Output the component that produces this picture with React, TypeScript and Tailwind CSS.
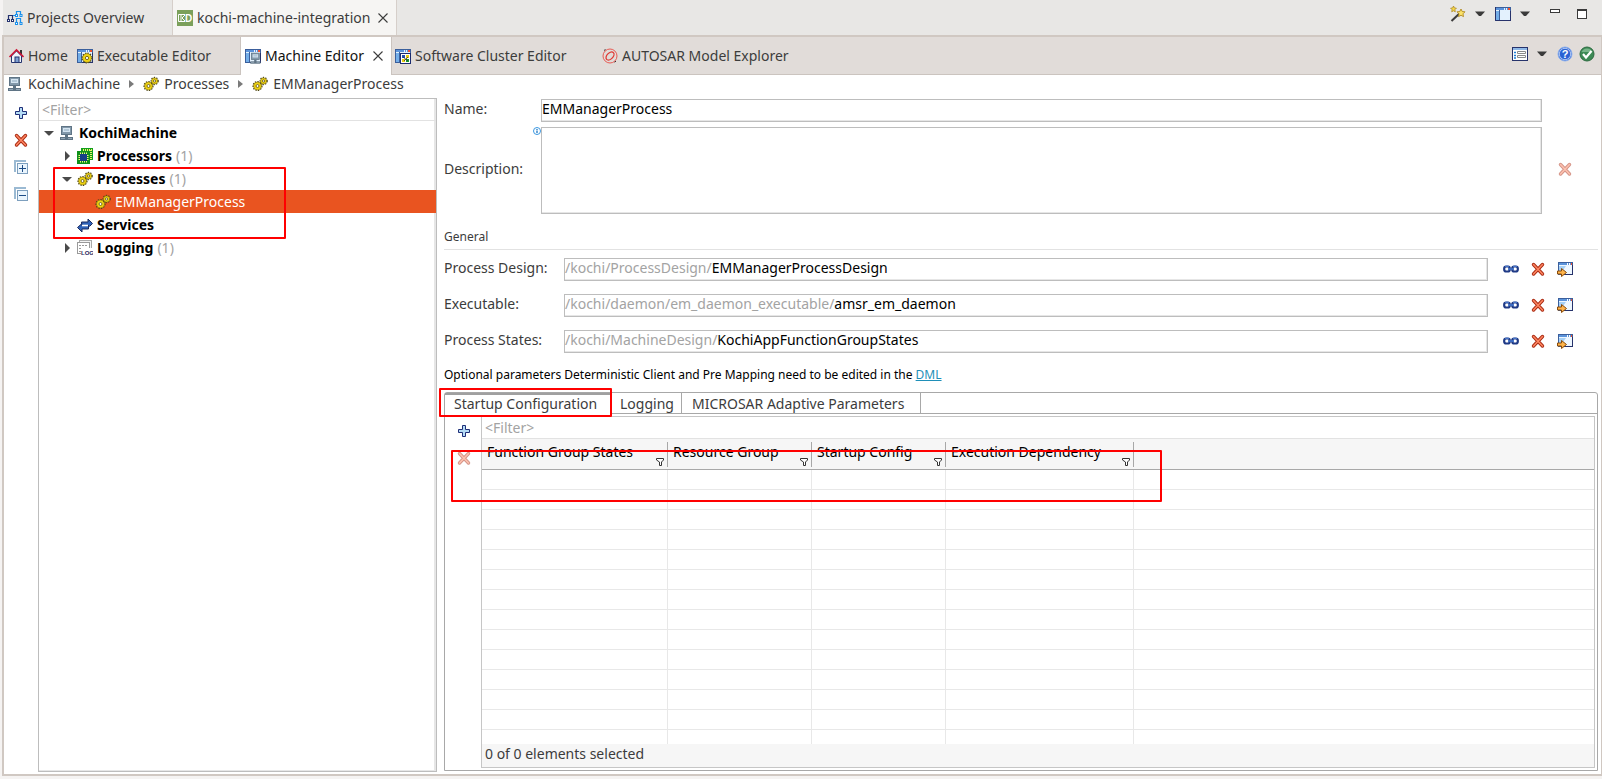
import type { ReactNode } from "react";
import clsx from "clsx";

type IconProps = { className?: string };

const field = "border border-[#bdbdbd] bg-white shadow-[inset_-1px_-1px_0_#e6e6e6] outline-none";

function Svg({ children, className }: IconProps & { children: ReactNode }) {
  return (
    <svg viewBox="0 0 16 16" className={clsx("w-4 h-4 shrink-0", className)} fill="none" aria-hidden="true">
      {children}
    </svg>
  );
}

function Cog({ x, y, r }: { x: number; y: number; r: number }) {
  return (
    <g>
      <circle cx={x} cy={y} r={r} stroke="#4a4318" strokeWidth="1.8" strokeDasharray="1.2 1.2" />
      <circle cx={x} cy={y} r={r - 0.2} fill="#f0d313" stroke="#7a6c0c" strokeWidth="0.6" />
      <circle cx={x} cy={y} r={r * 0.35} fill="#fff" stroke="#5c5108" strokeWidth="0.8" />
    </g>
  );
}

function GearsIcon() {
  return (
    <Svg>
      <Cog x={5.5} y={10} r={4.2} />
      <Cog x={11.6} y={5} r={3.3} />
    </Svg>
  );
}

function MachineShape() {
  return (
    <g>
      <rect x="2.5" y="1.5" width="10" height="8" fill="#8399ab" stroke="#5f7485" />
      <rect x="4" y="3" width="7" height="4" fill="#d5e5f1" />
      <path d="M5 5h5" stroke="#8fa9bd" />
      <path d="M7.5 10v3" stroke="#5f7485" strokeWidth="3" />
      <rect x="1" y="12" width="13" height="3" fill="#5f7485" />
      <path d="M2 13.5h4M9 13.5h4" stroke="#93a6b5" />
    </g>
  );
}

function MachineIcon() {
  return <Svg><MachineShape /></Svg>;
}

function WindowShape() {
  return (
    <g>
      <rect x="0.5" y="1.5" width="15" height="13" fill="#e3f1fd" stroke="#3b5f9c" />
      <rect x="1" y="2" width="14" height="2" fill="#5b93da" />
      <path d="M9 3h1M11 3h1" stroke="#e6f2ff" strokeWidth="2" />
      <path d="M13 3h2" stroke="#f0502c" strokeWidth="2" />
      <rect x="1" y="5" width="3" height="9" fill="#74aee8" />
      <path d="M4.5 4v10" stroke="#3b5f9c" />
      <path d="M5 14.5h11M15.5 5v10" stroke="#27336b" />
    </g>
  );
}

function ExecutableIcon() {
  return <Svg><WindowShape /><Cog x={10} y={10} r={4.6} /></Svg>;
}

function MachineEditorIcon() {
  return (
    <Svg>
      <WindowShape />
      <g transform="translate(4.5 4) scale(.78)"><MachineShape /></g>
    </Svg>
  );
}

function ClusterIcon() {
  return (
    <Svg>
      <WindowShape />
      <rect x="5.5" y="5.5" width="10" height="10" fill="#fff" stroke="#1c2b6e" />
      <rect x="7" y="7" width="3" height="3" fill="#2450b5" />
      <rect x="11" y="7" width="3" height="3" fill="#e8cc12" />
      <rect x="7" y="11" width="3" height="3" fill="#e8cc12" />
      <rect x="11" y="11" width="3" height="3" fill="#149b28" />
      <path d="M8 9l5 4M13 9l-4 4" stroke="#333" strokeWidth="0.8" />
    </Svg>
  );
}

function AutosarIcon() {
  return (
    <Svg>
      <circle cx="8" cy="8" r="7" stroke="#e84c45" strokeWidth="0.9" />
      <ellipse cx="8" cy="8" rx="4.8" ry="3" transform="rotate(-45 8 8)" stroke="#e03a35" strokeWidth="1.3" />
      <path d="M2 2.5l1.5-1M12.5 14.2l1.5-1" stroke="#333" />
    </Svg>
  );
}

function HomeIcon() {
  return (
    <Svg>
      <path d="M12 2h2v5h-2z" fill="#333" />
      <path d="M3.5 8v6.5h10V8l-5-5z" fill="#f1f3fa" stroke="#24346f" />
      <rect x="7" y="9" width="4" height="5.5" fill="#7f9fd0" stroke="#24346f" />
      <path d="M1.5 9l7-7 7 7" stroke="#cc1638" strokeWidth="1.7" />
    </Svg>
  );
}

function ProjectsIcon() {
  return (
    <Svg>
      <path d="M1.5 10V5.5h4V10" stroke="#26336f" strokeWidth="1.2" />
      <path d="M0 9h3v3H0zM4 9h3v3H4z" fill="#26336f" />
      <path d="M1 10h1v1H1zM5 10h1v1H5z" fill="#fff" />
      <path d="M9.5 4.500v-3h4v3M9.5 13V8.5h4V13" stroke="#1a91ec" strokeWidth="1.2" />
      <path d="M8 4h3v3H8zM12.5 4h3v3h-3zM8 12h3v3H8zM12.5 12h3v3h-3z" fill="#1a91ec" />
      <path d="M9 5h1v1H9zM13.5 5h1v1h-1zM9 13h1v1H9zM13.5 13h1v1h-1z" fill="#fff" />
      <path d="M6 5.5h2" stroke="#1a91ec" />
    </Svg>
  );
}

function ProjectLogo() {
  return (
    <Svg>
      <rect width="16" height="16" fill="#7ba05b" />
      <path d="M8 4.5H1.5v7H8" stroke="#fff" />
      <path d="M4 5v6M8 5L5 8l3 3" stroke="#fff" />
      <text x="8" y="12" fontSize="10" fontWeight="700" fill="#fff" fontFamily="Liberation Sans, sans-serif">D</text>
    </Svg>
  );
}

function CloseIcon() {
  return (
    <svg viewBox="0 0 10 10" className="w-[10px] h-[10px]" aria-hidden="true">
      <path d="M.5.5l9 9M9.5.5l-9 9" stroke="#3c3c3c" strokeWidth="1.1" />
    </svg>
  );
}

function PlusIcon() {
  return (
    <Svg>
      <path d="M6.5 2.5h3v4h4v3h-4v4h-3v-4h-4v-3h4z" fill="#b5dcf6" stroke="#1f2f78" />
    </Svg>
  );
}

function DeleteIcon() {
  return (
    <Svg>
      <path d="M3.5 3.5l9 9.500M12.5 3.5l-9 9.500" stroke="#a92a12" strokeWidth="3.4" strokeLinecap="round" />
      <path d="M3.5 3.5l9 9.500M12.5 3.5l-9 9.500" stroke="#fd8560" strokeWidth="1.6" strokeLinecap="round" />
    </Svg>
  );
}

function BoxesIcon({ plus }: { plus?: boolean }) {
  return (
    <Svg>
      <path d="M2 13V2h11" stroke="#9bbad3" strokeWidth="2" />
      <rect x="4.5" y="4.5" width="10" height="10" fill="#eaf5fd" stroke="#7d9fbe" />
      <path d="M6 9.5h7" stroke="#1c4c86" />
      {plus && <path d="M9.5 6v7" stroke="#1c4c86" />}
    </Svg>
  );
}

function ChipIcon() {
  return (
    <Svg>
      <rect x="4" y="0" width="12" height="12" fill="#12a01c" />
      <path d="M6 2h9M14 2v9" stroke="#f2ef6e" strokeWidth="2" strokeDasharray="1 1" />
      <rect x="0" y="3" width="13" height="13" fill="#0f9019" />
      <rect x="3" y="6" width="7" height="7" stroke="#f5f282" strokeWidth="3" strokeDasharray="1 1" />
      <rect x="3" y="6" width="7" height="7" fill="#173f86" />
    </Svg>
  );
}

function ServicesIcon() {
  return (
    <Svg>
      <path d="M4.5 9V5H11V2l4.5 4.5-3 3" fill="#2f62b8" stroke="#1c2b5e" />
      <path d="M11.5 8v4H5v3L.5 10.5 5 6.500v2h6.500z" fill="#2f62b8" stroke="#1c2b5e" />
      <path d="M5 8.5h6" stroke="#fff" strokeWidth="1.6" />
    </Svg>
  );
}

function LogIcon() {
  return (
    <Svg>
      <rect x="2.5" y="0.5" width="12" height="10" fill="#f4f4f4" stroke="#aaa" />
      <rect x="0.5" y="2.5" width="12" height="11" fill="#fff" stroke="#9a9a9a" />
      <path d="M2 5.5h9M2 8.5h9M2 11.5h2" stroke="#999" strokeDasharray="2 1" />
      <rect x="4" y="8" width="12" height="8" fill="#fff" />
      <text x="4" y="15" fontSize="6" fontWeight="700" fill="#26265e" fontFamily="Liberation Sans, sans-serif">LOG</text>
    </Svg>
  );
}

function LinkIcon() {
  return (
    <Svg>
      <rect x="1.2" y="5.5" width="5.6" height="5" rx="2" stroke="#1f3a86" strokeWidth="2.2" />
      <rect x="9.2" y="5.5" width="5.6" height="5" rx="2" stroke="#1f3a86" strokeWidth="2.2" />
      <path d="M2 5.3h4M10 5.3h4" stroke="#4f83d6" />
      <path d="M5 8h6" stroke="#3f70c8" strokeWidth="1.8" />
    </Svg>
  );
}

function GotoIcon() {
  return (
    <Svg>
      <rect x="1.5" y="1.5" width="14" height="12" fill="#eef7ff" stroke="#3b5f9c" />
      <path d="M2 3h13" stroke="#5b93da" strokeWidth="2" />
      <path d="M10 3h1M12 3h1" stroke="#fff" strokeWidth="2" />
      <path d="M14 3h1" stroke="#f0502c" strokeWidth="2" />
      <path d="M2 5h7l-6 8H2z" fill="#a6d0f5" />
      <path d="M15.5 4v10M6 13.5h10" stroke="#27336b" />
      <path d="M.5 10h4V7.500l5 4-5 4V13h-4z" fill="#ffb54c" stroke="#8a4b08" />
    </Svg>
  );
}

function WandIcon() {
  return (
    <Svg>
      <path d="M1.5 15L10 7" stroke="#3c3c3c" strokeWidth="2" />
      <path d="M11 3l1.200 2.500 2.800.3-2 2 .5 2.800-2.500-1.300-2.500 1.300.5-2.800-2-2 2.800-.3z" fill="#fbe26a" stroke="#a87f12" strokeWidth=".8" />
      <path d="M3.5 0l.9 1.900 2 .3-1.500 1.500.4 2.100-1.800-1-1.800 1 .4-2.100L.6 2.200l2-.3z" fill="#f4d74b" stroke="#a87f12" strokeWidth=".7" />
    </Svg>
  );
}

function PerspectiveIcon() {
  return <Svg><WindowShape /><path d="M.5 1v13.5H16" stroke="#27336b" /></Svg>;
}

function ListIcon() {
  return (
    <Svg>
      <rect x="0.5" y="1.5" width="15" height="13" fill="#fff" stroke="#27336b" />
      <path d="M1 3h14" stroke="#8fb9e8" strokeWidth="2" />
      <path d="M2 6.5h2M2 9.5h2M2 12h2" stroke="#1f7fd6" strokeWidth="1.5" />
      <path d="M5.5 5.5h8v2h-8zM5.5 9.5h8v2h-8z" stroke="#8a8a8a" />
    </Svg>
  );
}

function HelpIcon() {
  return (
    <Svg>
      <circle cx="8" cy="8" r="7" fill="#2a62d4" stroke="#8fb2ee" />
      <circle cx="8" cy="8" r="5.7" stroke="#e8f0ff" strokeWidth=".7" />
      <text x="8" y="12" fontSize="11" fontWeight="700" textAnchor="middle" fill="#fff" fontFamily="Liberation Sans, sans-serif">?</text>
    </Svg>
  );
}

function CheckIcon() {
  return (
    <Svg>
      <circle cx="8" cy="8" r="7" fill="#3d8a55" stroke="#2c6b40" />
      <path d="M2.5 6a6 6 0 0111 0z" fill="#78b58a" />
      <path d="M4 8l3 3.500L12.5 5" stroke="#fff" strokeWidth="2.2" />
    </Svg>
  );
}

function DropArrow() {
  return (
    <svg viewBox="0 0 10 6" className="w-[10px] h-[6px]" aria-hidden="true">
      <path d="M0 .5h10L6 5H4z" fill="#3a3a3a" />
    </svg>
  );
}

function CrumbArrow() {
  return (
    <svg viewBox="0 0 5 8" className="w-[5px] h-2" aria-hidden="true">
      <path d="M0 0l5 4-5 4z" fill="#7a7a7a" />
    </svg>
  );
}

function FunnelIcon() {
  return (
    <svg viewBox="0 0 8 8" className="w-2 h-2" fill="none" aria-hidden="true">
      <path d="M.5.5h7V2l-2 2v3.500h-2V4l-3-2z" fill="#fff" stroke="#333" />
    </svg>
  );
}

function IconButton({ label, children, disabled }: { label: string; children: ReactNode; disabled?: boolean }) {
  return (
    <button type="button" aria-label={label} disabled={disabled} className={clsx("flex items-center justify-center", disabled && "opacity-50")}>
      {children}
    </button>
  );
}

const indent = ["pl-px", "pl-[19px]", "pl-[37px]"];

const tree: { level: number; label: string; icon: ReactNode; count?: number; open?: boolean; selected?: boolean }[] = [
  { level: 0, label: "KochiMachine", icon: <MachineIcon />, open: true },
  { level: 1, label: "Processors", icon: <ChipIcon />, count: 1, open: false },
  { level: 1, label: "Processes", icon: <GearsIcon />, count: 1, open: true },
  { level: 2, label: "EMManagerProcess", icon: <GearsIcon />, selected: true },
  { level: 1, label: "Services", icon: <ServicesIcon /> },
  { level: 1, label: "Logging", icon: <LogIcon />, count: 1, open: false },
];

const references = [
  { id: "process-design", label: "Process Design:", path: "/kochi/ProcessDesign/", value: "EMManagerProcessDesign" },
  { id: "executable", label: "Executable:", path: "/kochi/daemon/em_daemon_executable/", value: "amsr_em_daemon" },
  { id: "process-states", label: "Process States:", path: "/kochi/MachineDesign/", value: "KochiAppFunctionGroupStates" },
];

const columns = [
  { label: "Function Group States", width: "w-[186px]" },
  { label: "Resource Group", width: "w-[144px]" },
  { label: "Startup Config", width: "w-[134px]" },
  { label: "Execution Dependency", width: "w-[188px]" },
];

const emptyRows = Array.from({ length: 40 }, (_, i) => i);

function TopTabs() {
  return (
    <header className="flex items-center h-[35px] shrink-0 ml-[3px] bg-[#e8e7e5]">
      <button type="button" className="flex items-center gap-1 h-full w-[170px] pl-1 border-r border-[#d6cfca]">
        <ProjectsIcon />
        Projects Overview
      </button>
      <div className="flex items-center h-full w-[224px] pl-1 bg-[#f6f5f3] border-r border-[#d6cfca]">
        <button type="button" className="flex items-center gap-1">
          <ProjectLogo />
          kochi-machine-integration
        </button>
        <button type="button" aria-label="Close project" className="ml-auto mr-2"><CloseIcon /></button>
      </div>
      <div className="flex items-center ml-auto pr-[15px] pb-[7px]">
        <IconButton label="Wizards"><WandIcon /></IconButton>
        <div className="flex ml-[9px] mr-[10px]"><IconButton label="Wizard menu"><DropArrow /></IconButton></div>
        <IconButton label="Perspective"><PerspectiveIcon /></IconButton>
        <div className="flex ml-[9px] mr-5"><IconButton label="Perspective menu"><DropArrow /></IconButton></div>
        <button type="button" aria-label="Minimize" className="w-[10px] h-1 mb-[6px] border border-[#3a3a3a] bg-white" />
        <button type="button" aria-label="Maximize" className="w-[10px] h-[10px] ml-[17px] border border-t-2 border-[#3a3a3a] bg-white" />
      </div>
    </header>
  );
}

function EditorTabs() {
  return (
    <nav className="flex items-center h-[38px] shrink-0 bg-[#e1dcd9] border-b border-[#cbc4bf]">
      <button type="button" className="flex items-center gap-1 w-[69px] pl-1 whitespace-nowrap"><HomeIcon />Home</button>
      <button type="button" className="flex items-center gap-1 w-[167px] pl-1 whitespace-nowrap"><ExecutableIcon />Executable Editor</button>
      <div className="flex items-center h-[38px] w-[152px] pl-1 bg-white border-x border-[#cbc4bf] text-[#111]">
        <button type="button" className="flex items-center gap-1 whitespace-nowrap"><MachineEditorIcon />Machine Editor</button>
        <button type="button" aria-label="Close editor" className="ml-auto mr-2"><CloseIcon /></button>
      </div>
      <button type="button" className="flex items-center gap-1 w-[206px] pl-[3px] whitespace-nowrap"><ClusterIcon />Software Cluster Editor</button>
      <button type="button" className="flex items-center gap-1 pl-1 whitespace-nowrap"><AutosarIcon />AUTOSAR Model Explorer</button>
      <div className="flex items-center ml-auto pr-[6px] pb-1">
        <IconButton label="View list"><ListIcon /></IconButton>
        <div className="flex ml-[9px] mr-[10px]"><IconButton label="View menu"><DropArrow /></IconButton></div>
        <IconButton label="Help"><HelpIcon /></IconButton>
        <div className="flex ml-[6px]"><IconButton label="Validation"><CheckIcon /></IconButton></div>
      </div>
    </nav>
  );
}

function Breadcrumb() {
  return (
    <nav aria-label="Breadcrumb" className="flex items-center h-[18px] mb-[5px] pl-[3px] shrink-0">
      <a href="#machine" className="flex items-center gap-[5px]"><MachineIcon />KochiMachine</a>
      <span className="mx-[9px]"><CrumbArrow /></span>
      <a href="#processes" className="flex items-center gap-[5px]"><GearsIcon />Processes</a>
      <span className="mx-[9px]"><CrumbArrow /></span>
      <a href="#process" className="flex items-center gap-[5px]"><GearsIcon />EMManagerProcess</a>
    </nav>
  );
}

function TreePanel() {
  return (
    <aside className="relative w-[399px] shrink-0 border border-[#bdbdbd] shadow-[inset_-2px_-1px_0_#e6e6e6]">
      <input aria-label="Filter tree" placeholder="<Filter>" className="block w-full h-[22px] px-[3px] border-b border-[#e2e2e2] outline-none placeholder:text-[#a3a3a3]" />
      <ul role="tree">
        {tree.map((node) => (
          <li
            key={node.label}
            role="treeitem"
            aria-selected={!!node.selected}
            className={clsx("flex items-center h-[23px]", indent[node.level], node.selected && "bg-[#e95420] text-white")}
          >
            <span className="flex justify-center w-[18px] mr-px">
              {node.open !== undefined && (
                <svg viewBox="0 0 10 10" className="w-[10px] h-[10px]" aria-hidden="true">
                  <path d={node.open ? "M0 3h10L5.5 7.500h-1z" : "M3 0l4.500 4.500v1L3 10z"} fill="#4a4a4a" />
                </svg>
              )}
            </span>
            {node.icon}
            <span className={clsx("ml-1", !node.selected && "font-bold text-black")}>{node.label}</span>
            {node.count && <span className="ml-1 text-[#a3a3a3]">({node.count})</span>}
          </li>
        ))}
      </ul>
      <div className="absolute left-[14px] top-[68px] w-[233px] h-[72px] border-2 border-[#ff0000] rounded-[1px] pointer-events-none" />
    </aside>
  );
}

function StartupTable() {
  return (
    <div className="flex flex-col flex-1 min-w-0 border border-[#c6c6c6]">
      <input aria-label="Filter table" placeholder="<Filter>" className="block w-full h-[22px] shrink-0 px-[3px] border-b border-[#e2e2e2] outline-none placeholder:text-[#a3a3a3]" />
      <div className="flex-1 min-h-0 overflow-hidden">
        <table className="w-full table-fixed border-separate border-spacing-0">
          <thead>
            <tr>
              {columns.map((col) => (
                <th key={col.label} scope="col" className={clsx("h-[31px] p-0 bg-[#f6f6f6] border-b border-[#a8a8a8] font-normal text-black text-left", col.width)}>
                  <div className="flex justify-between h-[25px] pl-[5px] pr-[3px] border-r border-[#a8a8a8] whitespace-nowrap leading-5">
                    {col.label}
                    <button type="button" aria-label={`Filter ${col.label}`} className="self-end pb-px"><FunnelIcon /></button>
                  </div>
                </th>
              ))}
              <td className="p-0 bg-[#f6f6f6] border-b border-[#a8a8a8]" />
            </tr>
          </thead>
          <tbody>
            {emptyRows.map((row) => (
              <tr key={row}>
                {columns.map((col) => (
                  <td key={col.label} className="h-5 p-0 border-b border-r border-[#e8e8e8]" />
                ))}
                <td className="h-5 p-0 border-b border-[#e8e8e8]" />
              </tr>
            ))}
          </tbody>
        </table>
      </div>
      <div className="flex items-center h-[23px] pb-1 shrink-0 px-[3px] bg-[#f6f6f6]">0 of 0 elements selected</div>
    </div>
  );
}

function TabFolder() {
  return (
    <section className="relative flex flex-col flex-1 min-h-0 mt-2 border border-[#a8a8a8] rounded-t-[3px]">
      <div role="tablist" className="flex h-[21px] shrink-0 text-left leading-[18px]">
        <button type="button" role="tab" aria-selected="true" className="w-[166px] pl-[9px] pb-px text-left border-t-2 border-r border-[#a0a0a0]">
          Startup Configuration
        </button>
        <button type="button" role="tab" aria-selected="false" className="w-[71px] pl-[9px] pt-px text-left border-b border-r border-[#a8a8a8]">Logging</button>
        <button type="button" role="tab" aria-selected="false" className="w-[239px] pl-[10px] pt-px text-left border-b border-r border-[#a8a8a8]">
          MICROSAR Adaptive Parameters
        </button>
        <span className="flex-1 border-b border-[#a8a8a8]" />
      </div>
      <div className="flex flex-1 min-h-0 pt-[2px] pr-[2px] pb-[2px]">
        <div className="flex flex-col items-center gap-[11px] w-9 shrink-0 pt-[7px] pl-[2px]">
          <IconButton label="Add startup configuration"><PlusIcon /></IconButton>
          <IconButton label="Delete startup configuration" disabled><DeleteIcon /></IconButton>
        </div>
        <StartupTable />
      </div>
      <div className="absolute -left-[6px] -top-[5px] w-[173px] h-[29px] border-2 border-[#ff0000] rounded-[1px] pointer-events-none" />
      <div className="absolute left-[6px] top-[57px] w-[711px] h-[52px] border-2 border-[#ff0000] rounded-[1px] pointer-events-none" />
    </section>
  );
}

function ProcessForm() {
  return (
    <main className="flex flex-col flex-1 min-w-0 ml-[7px] pt-px">
      <div className="flex h-[23px] shrink-0 pr-14">
        <label htmlFor="name" className="w-[97px] leading-5">Name:</label>
        <input id="name" defaultValue="EMManagerProcess" className={clsx("flex-1 min-w-0 pb-1 text-black", field)} />
      </div>
      <div className="flex items-center mt-[5px] shrink-0">
        <label htmlFor="description" className="relative flex items-center self-stretch w-[97px] pb-1">
          Description:
          <svg viewBox="0 0 8 8" className="absolute right-0 top-0 w-2 h-2" fill="none" aria-hidden="true">
            <circle cx="4" cy="4" r="3.5" stroke="#3b97e0" />
            <path d="M4 2v1M4 3.600v2.400" stroke="#2a7fc8" strokeWidth="1.4" />
          </svg>
        </label>
        <textarea id="description" className={clsx("flex-1 min-w-0 h-[87px] resize-none", field)} />
        <div className="flex justify-center w-14 pr-[10px] pb-1"><IconButton label="Clear description" disabled><DeleteIcon /></IconButton></div>
      </div>

      <h2 className="flex items-center h-[26px] mt-[10px] shrink-0 border-b border-[#e2e2e2] text-xs">General</h2>
      <div className="flex flex-col gap-[13px] mt-2 shrink-0">
        {references.map((ref) => (
          <div key={ref.id} className="flex h-[23px]">
            <label htmlFor={ref.id} className="w-[120px] leading-5">{ref.label}</label>
            <div className={clsx("flex flex-1 min-w-0 leading-[18px]", field)}>
              <span className="text-[#a3a3a3]">{ref.path}</span>
              <input id={ref.id} defaultValue={ref.value} className="flex-1 min-w-0 h-[18px] bg-transparent text-black outline-none" />
            </div>
            <div className="flex items-center gap-[11px] w-[110px] pl-[15px] pb-[2px]">
              <IconButton label="Select reference"><LinkIcon /></IconButton>
              <IconButton label="Remove reference"><DeleteIcon /></IconButton>
              <IconButton label="Go to reference"><GotoIcon /></IconButton>
            </div>
          </div>
        ))}
      </div>
      <p className="mt-[13px] shrink-0 text-xs leading-[18px] text-black">
        Optional parameters Deterministic Client and Pre Mapping need to be edited in the{" "}
        <a href="#dml" className="text-[#1f8fb8] underline">DML</a>
      </p>
      <TabFolder />
    </main>
  );
}

export default function App() {
  return (
    <div className="flex flex-col h-screen pb-[3px] bg-[#f5f3f2] font-['Noto_Sans',sans-serif] text-[14px] leading-[18px] text-[#3c3c3c]">
      <TopTabs />
      <div className="flex flex-col flex-1 min-h-0 ml-[2px] border-2 border-r border-[#d0c8c2] bg-white">
        <EditorTabs />
        <Breadcrumb />
        <div className="flex flex-1 min-h-0 pr-[3px]">
          <div className="flex flex-col items-center gap-[11px] w-[34px] shrink-0 pt-[7px]">
            <IconButton label="Add"><PlusIcon /></IconButton>
            <IconButton label="Delete"><DeleteIcon /></IconButton>
            <IconButton label="Expand all"><BoxesIcon plus /></IconButton>
            <IconButton label="Collapse all"><BoxesIcon /></IconButton>
          </div>
          <div className="flex pb-[2px]"><TreePanel /></div>
          <div className="flex flex-1 min-w-0 pb-[3px]"><ProcessForm /></div>
        </div>
      </div>
    </div>
  );
}
